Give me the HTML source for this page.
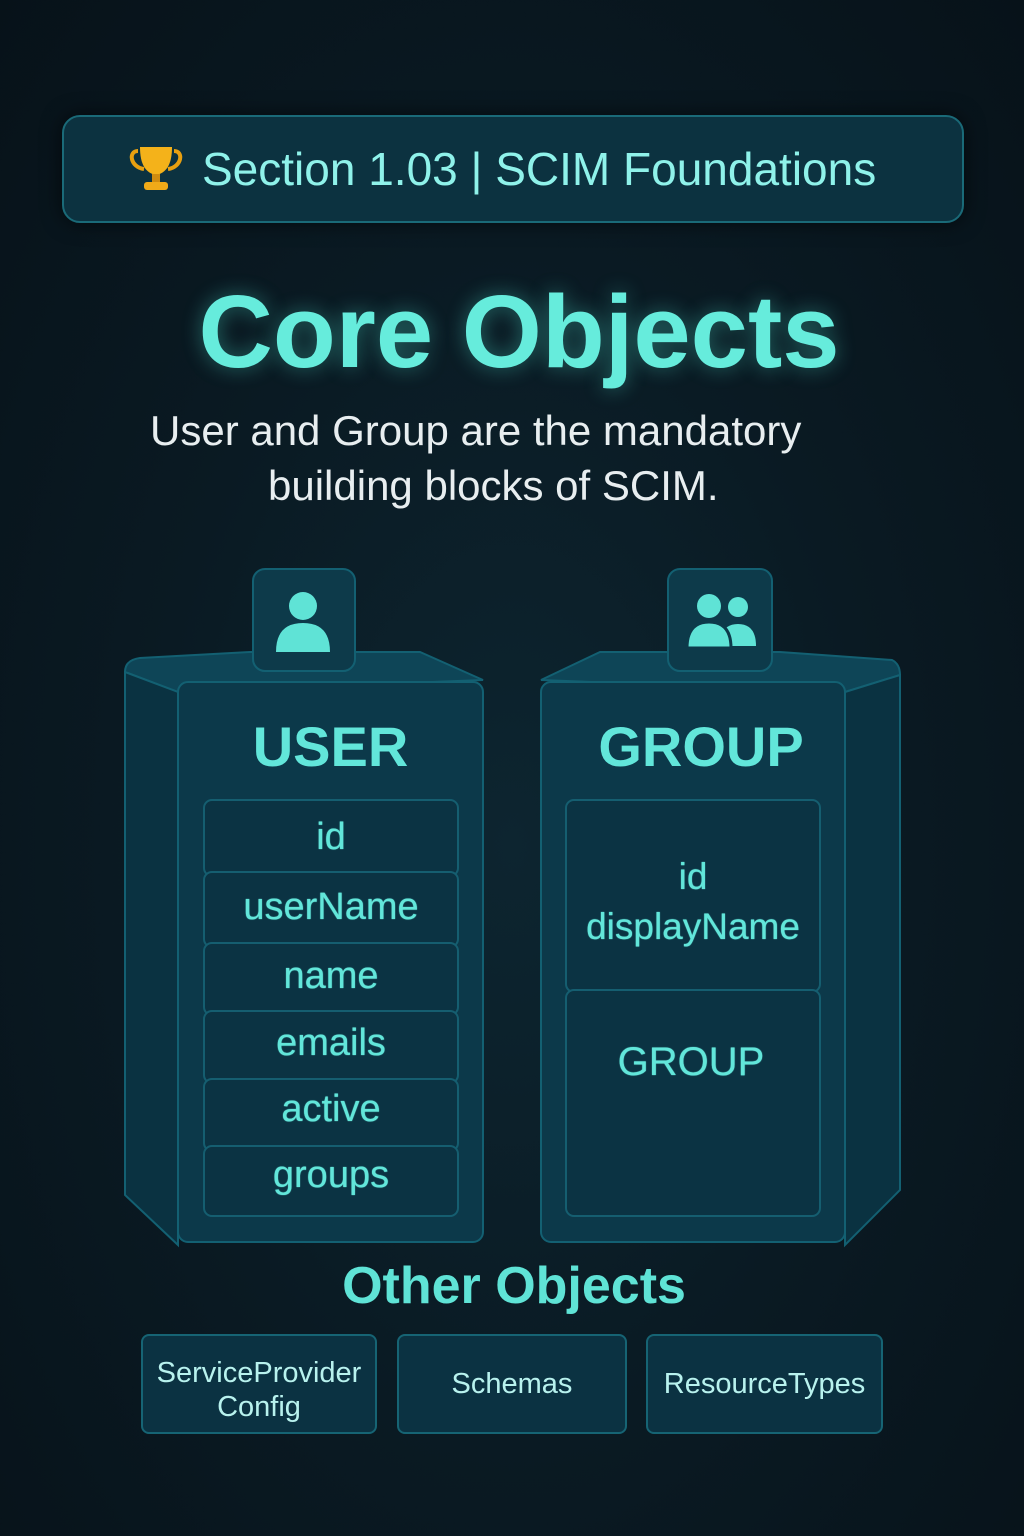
<!DOCTYPE html>
<html><head><meta charset="utf-8"><style>
body{margin:0;width:1024px;height:1536px;overflow:hidden;background:radial-gradient(ellipse at 50% 55%,#0d2530 0%,#0a1a23 50%,#071219 100%);font-family:"Liberation Sans",sans-serif;position:relative}
.abs{position:absolute}
.t{color:#62e6da;text-align:center}
.f{font-weight:normal;text-shadow:0 0 1px #62e6da}
</style></head><body>
<div class="abs" style="left:62px;top:115px;width:898px;height:104px;border:2px solid #1a6a78;border-radius:18px;background:#0c3240;box-shadow:0 0 20px rgba(0,0,0,.6)"></div>
<svg class="abs" style="left:128px;top:145px" width="56" height="50" viewBox="0 0 56 50">
<path d="M10 6 C0 6 2 22 16 24 M46 6 C56 6 54 22 40 24" stroke="#e8a010" stroke-width="4" fill="none"/>
<path d="M12 2 H44 C44 20 38 28 28 30 C18 28 12 20 12 2Z" fill="#f4b21a"/>
<rect x="24" y="29" width="8" height="8" fill="#d08c10"/>
<rect x="16" y="37" width="24" height="8" rx="3" fill="#f0aa18"/>
</svg>
<div class="abs" style="left:202px;top:142px;font-size:46px;color:#8ff2ea;white-space:nowrap">Section 1.03 | SCIM Foundations</div>
<div class="abs t" style="left:0;width:1038px;top:273px;font-size:103px;font-weight:bold;color:#66ecdc;text-shadow:0 0 20px rgba(80,230,210,.4)">Core Objects</div>
<div class="abs" style="left:150px;top:406px;font-size:42px;color:#e8eef0;white-space:nowrap;line-height:50px">User and Group are the mandatory</div>
<div class="abs" style="left:268px;top:461px;font-size:42px;color:#e8eef0;white-space:nowrap;line-height:50px">building blocks of SCIM.</div>
<svg class="abs" style="left:0;top:0" width="1024" height="1536">
<g stroke="#136072" stroke-width="2">
<path d="M125 672 Q125 660 140 658 L250 652 L420 652 L483 680 L178 692 Z" fill="#0e4557"/>
<path d="M125 672 L178 692 L178 1245 L125 1195 Z" fill="#0a3241"/>
<rect x="178" y="682" width="305" height="560" rx="10" fill="#0c394a"/>
<path d="M541 680 L600 652 L780 652 L892 660 Q900 664 900 675 L845 692 Z" fill="#0e4557"/>
<path d="M845 692 L900 675 L900 1190 L845 1245 Z" fill="#0a3241"/>
<rect x="541" y="682" width="304" height="560" rx="10" fill="#0c394a"/>
<rect x="253" y="569" width="102" height="102" rx="12" fill="#0d3a4a"/>
<rect x="668" y="569" width="104" height="102" rx="12" fill="#0d3a4a"/>
</g>
<g fill="#5fe3d6">
<circle cx="303" cy="606" r="14"/>
<path d="M276 652 Q276 623 303 623 Q330 623 330 652Z"/>
<circle cx="738" cy="607" r="10"/>
<path d="M720 646 Q720 624 738 624 Q756 624 756 646Z"/>
<circle cx="709" cy="606" r="12"/>
<path d="M687 648 Q687 622 709 622 Q731 622 731 648Z" stroke="#0d3a4a" stroke-width="3"/>
</g>
<g stroke="#155e70" stroke-width="2" fill="#0b3343">
<rect x="204" y="800" width="254" height="76" rx="8"/>
<rect x="204" y="872" width="254" height="75" rx="8"/>
<rect x="204" y="943" width="254" height="72" rx="8"/>
<rect x="204" y="1011" width="254" height="72" rx="8"/>
<rect x="204" y="1079" width="254" height="72" rx="8"/>
<rect x="204" y="1146" width="254" height="70" rx="8"/>
<rect x="566" y="800" width="254" height="192" rx="8"/>
<rect x="566" y="990" width="254" height="226" rx="8"/>
</g>
</svg>
<div class="abs t" style="left:178px;width:305px;top:714px;font-size:56px;font-weight:bold">USER</div>
<div class="abs t" style="left:541px;width:320px;top:714px;font-size:56px;font-weight:bold">GROUP</div>
<div class="abs t f" style="left:204px;width:254px;font-size:38px;top:816px">id</div>
<div class="abs t f" style="left:204px;width:254px;font-size:38px;top:886px">userName</div>
<div class="abs t f" style="left:204px;width:254px;font-size:38px;top:955px">name</div>
<div class="abs t f" style="left:204px;width:254px;font-size:38px;top:1022px">emails</div>
<div class="abs t f" style="left:204px;width:254px;font-size:38px;top:1088px">active</div>
<div class="abs t f" style="left:204px;width:254px;font-size:38px;top:1154px">groups</div>
<div class="abs t f" style="left:566px;width:254px;font-size:37px;top:852px;line-height:50px">id<br>displayName</div>
<div class="abs t f" style="left:566px;width:250px;font-size:40px;top:1040px">GROUP</div>
<div class="abs t" style="left:0;width:1028px;top:1256px;font-size:52px;font-weight:bold;color:#5fe3d6">Other Objects</div>
<div class="abs" style="left:141px;top:1334px;width:236px;height:100px;border:2px solid #166474;border-radius:8px;background:#0b3242;color:#b8f2ee;font-size:29px;text-align:center;box-sizing:border-box;padding-top:20px;line-height:34px">ServiceProvider<br>Config</div>
<div class="abs" style="left:397px;top:1334px;width:230px;height:100px;border:2px solid #166474;border-radius:8px;background:#0b3242;color:#b8f2ee;font-size:29px;text-align:center;box-sizing:border-box;padding-top:32px">Schemas</div>
<div class="abs" style="left:646px;top:1334px;width:237px;height:100px;border:2px solid #166474;border-radius:8px;background:#0b3242;color:#b8f2ee;font-size:29px;text-align:center;box-sizing:border-box;padding-top:32px">ResourceTypes</div>
</body></html>
